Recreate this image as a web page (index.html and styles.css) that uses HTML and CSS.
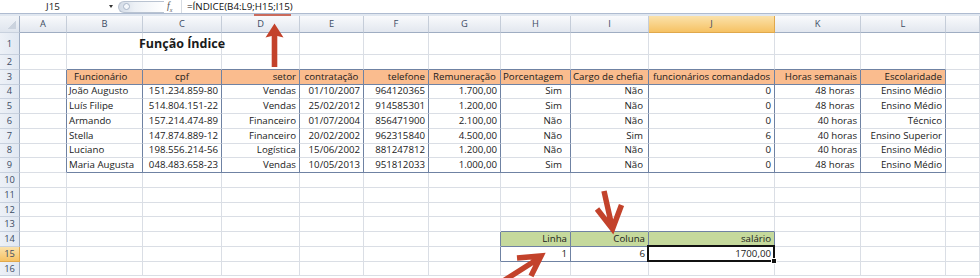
FILE: index.html
```html
<!DOCTYPE html>
<html>
<head>
    <title>Função Índice</title>
    <link rel="stylesheet" href="styles.css">
</head>
<body>
    <div class="formula-bar">
        <div class="name-box">J15</div>
        <span class="drop"></span>
        <span class="grip"><i></i></span>
        <span class="fx">f<sub>x</sub></span>
        <span class="sep"></span>
        <div class="formula">=ÍNDICE(B4:L9;H15;I15)</div>
    </div>

    <div class="sheet">
        <table>
            <colgroup>
                <col class="w-rh"><col class="w-a"><col class="w-b"><col class="w-c"><col class="w-d"><col class="w-e"><col class="w-f">
                <col class="w-g"><col class="w-h"><col class="w-i"><col class="w-j"><col class="w-k"><col class="w-l"><col class="w-m">
            </colgroup>
            <tr class="colhead">
                <th class="corner"></th><th>A</th><th>B</th><th>C</th><th>D</th><th>E</th><th>F</th>
                <th>G</th><th>H</th><th>I</th><th class="sel">J</th><th>K</th><th>L</th><th></th>
            </tr>
            <tr class="r1">
                <th>1</th><td></td><td></td><td class="title"><span>Função Índice</span></td><td></td><td></td><td></td>
                <td></td><td></td><td></td><td></td><td></td><td></td><td></td>
            </tr>
            <tr>
                <th>2</th><td></td><td class="top"></td><td class="top"></td><td class="top"></td><td class="top"></td><td class="top"></td>
                <td class="top"></td><td class="top"></td><td class="top"></td><td class="top"></td><td class="top"></td><td class="top"></td><td></td>
            </tr>
            <tr class="hd">
                <th>3</th><td class="lft"></td>
                <td class="tb l ind">Funcionário</td><td class="tb c">cpf</td><td class="tb">setor</td><td class="tb c">contratação</td>
                <td class="tb">telefone</td><td class="tb c">Remuneração</td><td class="tb l">Porcentagem</td><td class="tb l">Cargo de chefia</td>
                <td class="tb c">funcionários comandados</td><td class="tb">Horas semanais</td><td class="tb">Escolaridade</td><td></td>
            </tr>
            <tr>
                <th>4</th><td class="lft"></td>
                <td class="tb l">João Augusto</td><td class="tb">151.234.859-80</td><td class="tb">Vendas</td><td class="tb">01/10/2007</td>
                <td class="tb">964120365</td><td class="tb">1.700,00</td><td class="tb pr">Sim</td><td class="tb pi">Não</td>
                <td class="tb">0</td><td class="tb">48 horas&nbsp;</td><td class="tb">Ensino Médio</td><td></td>
            </tr>
            <tr>
                <th>5</th><td class="lft"></td>
                <td class="tb l">Luís Filipe</td><td class="tb">514.804.151-22</td><td class="tb">Vendas</td><td class="tb">25/02/2012</td>
                <td class="tb">914585301</td><td class="tb">1.200,00</td><td class="tb pr">Sim</td><td class="tb pi">Não</td>
                <td class="tb">0</td><td class="tb">48 horas&nbsp;</td><td class="tb">Ensino Médio</td><td></td>
            </tr>
            <tr>
                <th>6</th><td class="lft"></td>
                <td class="tb l">Armando</td><td class="tb">157.214.474-89</td><td class="tb">Financeiro</td><td class="tb">01/07/2004</td>
                <td class="tb">856471900</td><td class="tb">2.100,00</td><td class="tb pr">Não</td><td class="tb pi">Não</td>
                <td class="tb">0</td><td class="tb">40 horas</td><td class="tb">Técnico</td><td></td>
            </tr>
            <tr>
                <th>7</th><td class="lft"></td>
                <td class="tb l">Stella</td><td class="tb">147.874.889-12</td><td class="tb">Financeiro</td><td class="tb">20/02/2002</td>
                <td class="tb">962315840</td><td class="tb">4.500,00</td><td class="tb pr">Não</td><td class="tb pi">Sim</td>
                <td class="tb">6</td><td class="tb">40 horas</td><td class="tb">Ensino Superior</td><td></td>
            </tr>
            <tr>
                <th>8</th><td class="lft"></td>
                <td class="tb l">Luciano</td><td class="tb">198.556.214-56</td><td class="tb">Logística</td><td class="tb">15/06/2002</td>
                <td class="tb">881247812</td><td class="tb">1.200,00</td><td class="tb pr">Não</td><td class="tb pi">Não</td>
                <td class="tb">0</td><td class="tb">40 horas</td><td class="tb">Ensino Médio</td><td></td>
            </tr>
            <tr class="last">
                <th>9</th><td class="lft"></td>
                <td class="tb l">Maria Augusta</td><td class="tb">048.483.658-23</td><td class="tb">Vendas</td><td class="tb">10/05/2013</td>
                <td class="tb">951812033</td><td class="tb">1.000,00</td><td class="tb pr">Sim</td><td class="tb pi">Não</td>
                <td class="tb">0</td><td class="tb">48 horas&nbsp;</td><td class="tb">Ensino Médio</td><td></td>
            </tr>
            <tr>
                <th>10</th><td></td><td></td><td></td><td></td><td></td><td></td>
                <td></td><td></td><td></td><td></td><td></td><td></td><td></td>
            </tr>
            <tr>
                <th>11</th><td></td><td></td><td></td><td></td><td></td><td></td>
                <td></td><td></td><td></td><td></td><td></td><td></td><td></td>
            </tr>
            <tr>
                <th>12</th><td></td><td></td><td></td><td></td><td></td><td></td>
                <td></td><td></td><td></td><td></td><td></td><td></td><td></td>
            </tr>
            <tr>
                <th>13</th><td></td><td></td><td></td><td></td><td></td><td></td>
                <td></td><td class="top"></td><td class="top"></td><td class="top"></td><td></td><td></td><td></td>
            </tr>
            <tr class="last">
                <th>14</th><td></td><td></td><td></td><td></td><td></td><td></td>
                <td class="lft"></td><td class="tb g">Linha</td><td class="tb g">Coluna</td><td class="tb g">salário</td><td></td><td></td><td></td>
            </tr>
            <tr class="last">
                <th class="sel">15</th><td></td><td></td><td></td><td></td><td></td><td></td>
                <td class="lft"></td><td class="tb">1</td><td class="tb">6</td><td class="tb cur">1700,00</td><td></td><td></td><td></td>
            </tr>
            <tr>
                <th>16</th><td></td><td></td><td></td><td></td><td></td><td></td>
                <td></td><td></td><td></td><td></td><td></td><td></td><td></td>
            </tr>
        </table>
    </div>

    <!-- annotations drawn over the sheet -->
    <svg class="marks" width="980" height="278" viewBox="0 0 980 278">
        <line x1="254" y1="15" x2="291" y2="15" stroke="#c3422b" stroke-width="1.5"/>
        <polygon points="274.5,23.5 283.5,37.5 277.3,36 277.3,67 271.7,67 271.7,36 265.5,37.5" fill="#c3422b"/>
        <path d="M604 191 L612.5 229 M597 209 L612.5 229 L621.5 205" stroke="#c3422b" stroke-width="5.5" fill="none"/>
        <path d="M497 285 L541 257 M517 258 L541 256 L531 276" stroke="#c3422b" stroke-width="5.5" fill="none"/>
    </svg>
</body>
</html>
```

FILE: styles.css
```css
body {
    margin: 0;
    width: 980px;
    height: 278px;
    overflow: hidden;
    position: relative;
    background: #fff;
    font-family: 'Open Sans', sans-serif;
    color: #111;
}
.formula-bar {
    display: flex;
    align-items: center;
    height: 13px;
    border-bottom: 1px solid #aebbd0;
    font-size: 9.8px;
}
.name-box {
    width: 106px;
    text-align: center;
    color: #222;
}
.drop {
    width: 0;
    height: 0;
    margin-left: 3px;
    border-left: 2.5px solid transparent;
    border-right: 2.5px solid transparent;
    border-top: 3px solid #333;
}
.grip {
    display: flex;
    align-items: center;
    width: 46px;
    height: 12px;
    margin-left: 5px;
    box-sizing: border-box;
    border: 1px solid #b9c3d1;
    border-right: none;
    border-radius: 6px 0 0 6px;
    background: linear-gradient(90deg, #d3dbe6, #edf1f6 35%, #fff);
}
.grip i {
    width: 5px;
    height: 5px;
    margin-left: 4px;
    border: 1px solid #a9b6c8;
    border-radius: 50%;
    background: #f4f7fb;
}
.fx {
    margin-left: 3px;
    width: 9px;
    font-family: 'Liberation Serif', serif;
    font-style: italic;
    color: #555;
}
.fx sub {
    font-size: 6px;
}
.sep {
    width: 1px;
    height: 13px;
    margin-left: 5px;
    background: #d6dbe2;
}
.formula {
    margin-left: 5px;
    color: #111;
}

.sheet {
    border-top: 2px solid #e0e7f0;
}
table {
    border-collapse: separate;
    border-spacing: 0;
    table-layout: fixed;
    width: 980px;
    font-size: 9.7px;
}
.w-rh { width: 20px; }
.w-a { width: 47px; }
.w-b { width: 76px; }
.w-c { width: 79px; }
.w-d { width: 78px; }
.w-e { width: 64px; }
.w-f { width: 65px; }
.w-g { width: 72px; }
.w-h { width: 70px; }
.w-i { width: 78px; }
.w-j { width: 126px; }
.w-k { width: 86px; }
.w-l { width: 85px; }
.w-m { width: 34px; }

tr {
    height: 14.77px;
}
tr.colhead {
    height: 17px;
}
tr.r1 {
    height: 22px;
}
th, td {
    padding: 0 3px;
    white-space: nowrap;
    overflow: hidden;
    line-height: 12px;
}
th {
    font-weight: normal;
    font-size: 9.3px;
    color: #3c4b63;
    text-align: center;
    padding: 0;
}
.colhead th {
    background: linear-gradient(#f9fafc, #e2e7ef);
    border-right: 1px solid #c5cdd9;
    border-bottom: 1px solid #9fadc2;
}
.colhead th.corner {
    background: linear-gradient(135deg, transparent 50%, #cbd3de 50%) no-repeat right 3px bottom 3px / 9px 9px,
                linear-gradient(#f1f4f8, #dfe5ee);
}
tr > th:first-child {
    background: linear-gradient(90deg, #edf1f7, #e1e8f2);
    border-right: 1px solid #9fadc2;
    border-bottom: 1px solid #c8d1de;
}
.colhead th.sel,
tr > th.sel:first-child {
    background: linear-gradient(#fbe2ab, #f6c264);
    border-right-color: #e0a84c;
    border-bottom-color: #e0a84c;
}
td {
    text-align: right;
    color: #1a1a1a;
    border-right: 1px solid #dadee5;
    border-bottom: 1px solid #dadee5;
}
td.l { text-align: left; padding-left: 2px; }
td.c { text-align: center; padding: 0 1px; }
td.ind { padding-left: 7px; }
td.pr { padding-right: 8px; }
td.pi { padding-right: 5px; }

td.title {
    overflow: visible;
    text-align: center;
    font-weight: bold;
    font-size: 12.5px;
}
td.title span {
    display: block;
    margin: 0 -30px;
}

td.top { border-bottom-color: #6f82a3; }
td.lft { border-right-color: #6f82a3; }
td.tb { border-right-color: #6f82a3; }
.hd td.tb {
    background: #fabc8e;
    border-bottom-color: #6f82a3;
}
.last td.tb { border-bottom-color: #6f82a3; }
td.g { background: #c5d99c; }

td.cur {
    position: relative;
    overflow: visible;
}
td.cur::after {
    content: "";
    position: absolute;
    left: -2px;
    top: -2px;
    right: -1px;
    bottom: -1px;
    border: 2px solid #111;
}
td.cur::before {
    content: "";
    position: absolute;
    right: -3px;
    bottom: -3px;
    width: 4px;
    height: 4px;
    background: #111;
    border: 1px solid #fff;
    z-index: 1;
}

.marks {
    position: absolute;
    left: 0;
    top: 0;
    pointer-events: none;
}
```
